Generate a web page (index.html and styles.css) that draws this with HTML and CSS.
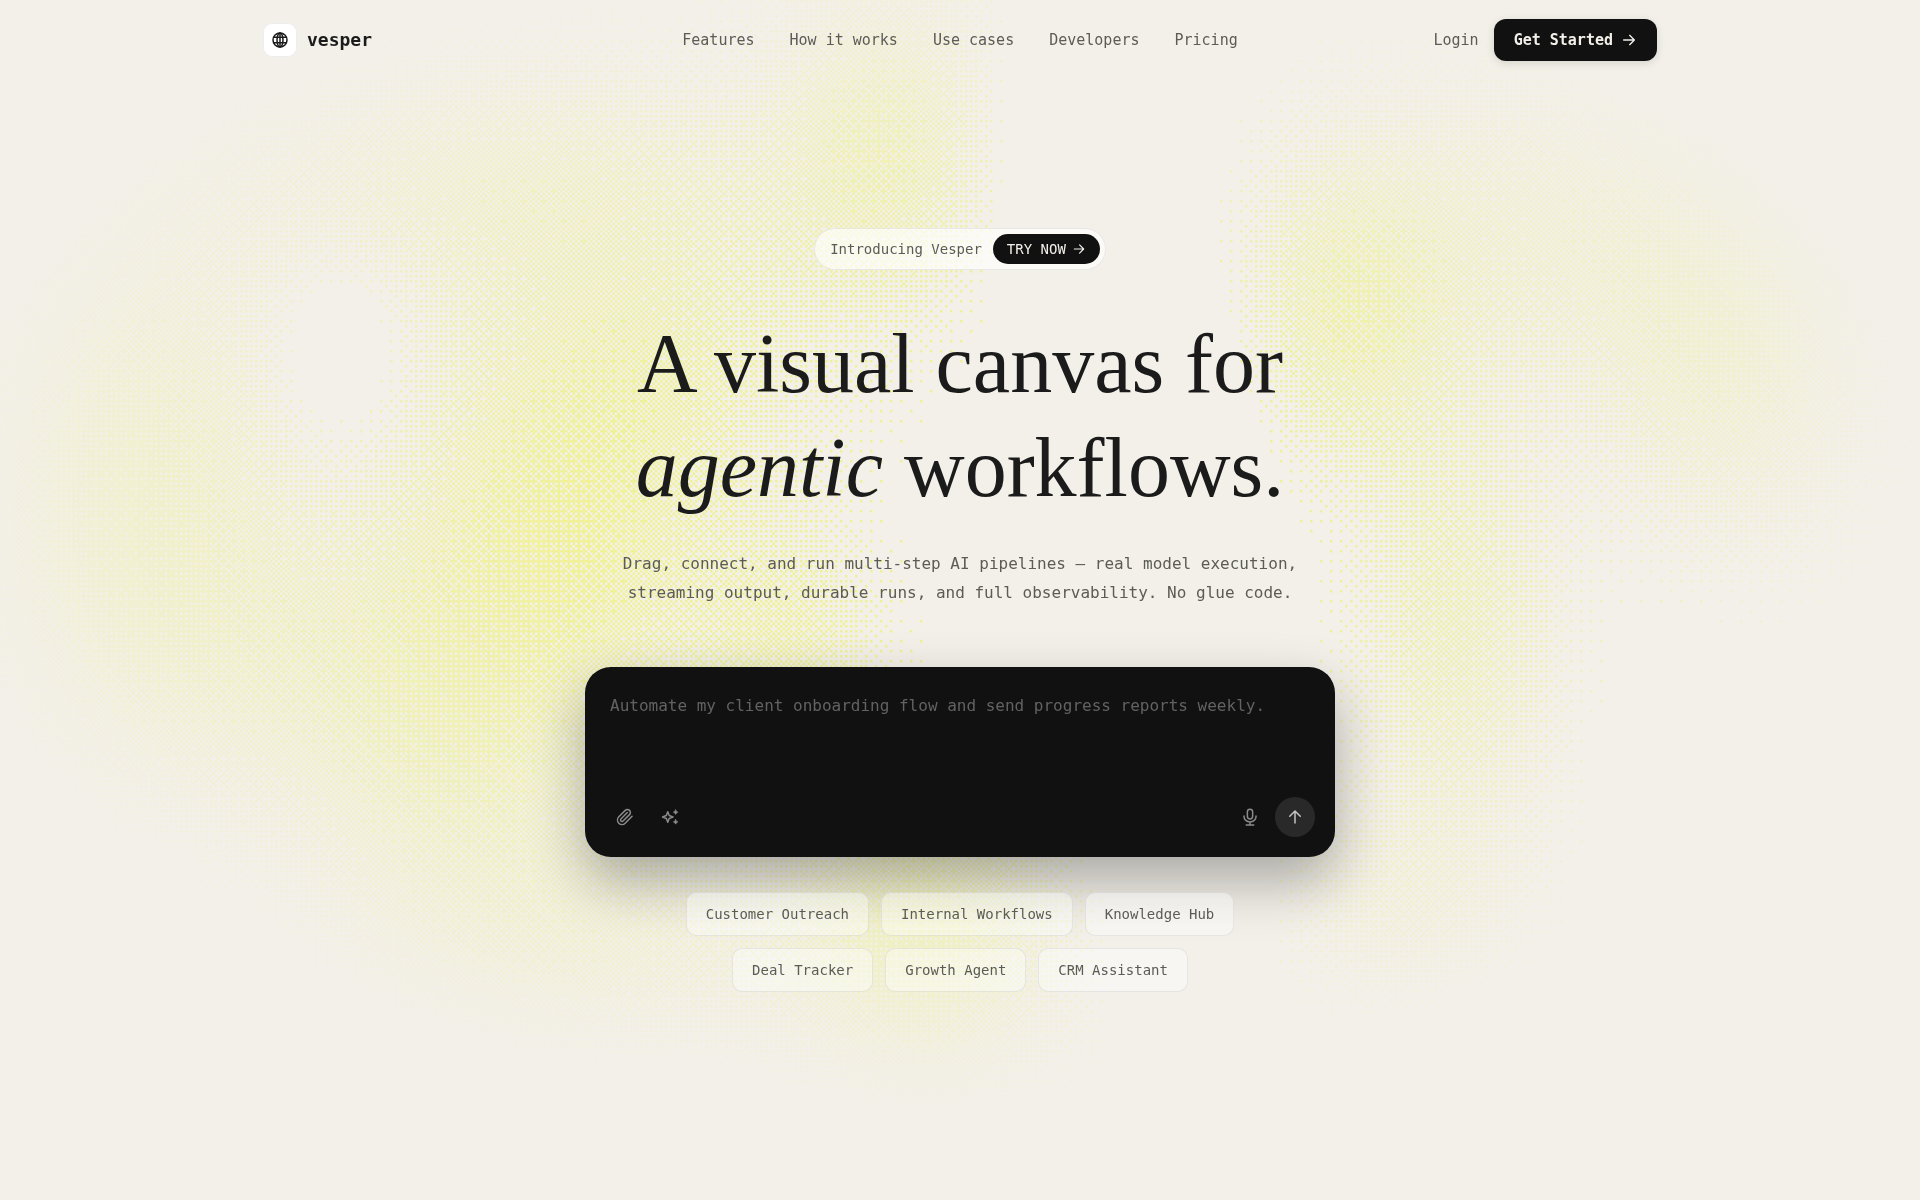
FILE: index.html
```html
<!DOCTYPE html>
<html lang="en">
<head>
<meta charset="utf-8">
<meta name="viewport" content="width=device-width, initial-scale=1">
<title>Vesper</title>
<link rel="stylesheet" href="styles.css">
</head>
<body>
<canvas class="backdrop" aria-hidden="true"></canvas>
<div class="page">
  <header class="header">
    <a class="brand" href="#">
      <span class="brand-mark">
        <svg class="icon-brand" viewBox="0 0 16 16" aria-hidden="true"><circle cx="8" cy="8" r="7"/><ellipse cx="8" cy="8" rx="3" ry="7"/><path d="M8 1v14M1.8 5.2h12.4M1.8 10.8h12.4"/></svg>
      </span>
      <span class="brand-name">vesper</span>
    </a>
    <nav class="nav" aria-label="Main">
      <a href="#">Features</a>
      <a href="#">How it works</a>
      <a href="#">Use cases</a>
      <a href="#">Developers</a>
      <a href="#">Pricing</a>
    </nav>
    <div class="account">
      <a class="login" href="#">Login</a>
      <button class="start" type="button">Get Started
        <svg class="icon-small" viewBox="0 0 24 24" aria-hidden="true"><path d="M4 12h16M13 5l7 7-7 7"/></svg>
      </button>
    </div>
  </header>

  <main class="hero">
    <div class="intro">
      <span>Introducing Vesper</span>
      <button class="try" type="button">TRY NOW
        <svg class="icon-tiny" viewBox="0 0 24 24" aria-hidden="true"><path d="M4 12h16M13 5l7 7-7 7"/></svg>
      </button>
    </div>
    <h1 class="title">A visual canvas for<br><em>agentic</em> workflows.</h1>
    <p class="lead">Drag, connect, and run multi-step AI pipelines — real model execution,<br>streaming output, durable runs, and full observability. No glue code.</p>

    <form class="composer">
      <textarea class="prompt" aria-label="Describe your workflow" placeholder="Automate my client onboarding flow and send progress reports weekly."></textarea>
      <div class="tools">
        <button class="tool" type="button" aria-label="Attach file">
          <svg class="icon" viewBox="0 0 24 24" aria-hidden="true"><path d="m21.44 11.05-9.19 9.19a6 6 0 0 1-8.49-8.49l8.57-8.57A4 4 0 1 1 18 8.84l-8.59 8.57a2 2 0 0 1-2.83-2.83l8.49-8.48"/></svg>
        </button>
        <button class="tool" type="button" aria-label="Enhance prompt">
          <svg class="icon" viewBox="0 0 24 24" aria-hidden="true"><path d="M9 5l1.900 5.100L16 12l-5.100 1.900L9 19l-1.900-5.100L2 12l5.100-1.900z"/><path class="solid" d="M19.500 2.500l1 2 2 1-2 1-1 2-1-2-2-1 2-1zM19.500 15.500l1 2 2 1-2 1-1 2-1-2-2-1 2-1z"/></svg>
        </button>
        <button class="tool mic" type="button" aria-label="Dictate">
          <svg class="icon" viewBox="0 0 24 24" aria-hidden="true"><rect x="8.500" y="1.500" width="7" height="13" rx="3.500"/><path d="M4 10.500v1a8 7 0 0 0 16 0v-1M12 18.500v4M7 22.500h10"/></svg>
        </button>
        <button class="tool send" type="submit" aria-label="Send">
          <svg class="icon" viewBox="0 0 24 24" aria-hidden="true"><path d="M12 20V4M5 11l7-7 7 7"/></svg>
        </button>
      </div>
    </form>

    <div class="chips">
      <button class="chip" type="button">Customer Outreach</button>
      <button class="chip" type="button">Internal Workflows</button>
      <button class="chip" type="button">Knowledge Hub</button>
      <button class="chip" type="button">Deal Tracker</button>
      <button class="chip" type="button">Growth Agent</button>
      <button class="chip" type="button">CRM Assistant</button>
    </div>
  </main>
</div>
<script src="backdrop.js"></script>
</body>
</html>
```
FILE: styles.css
```css
:root {
  --paper: #f3f0e9;
  --ink: #111111;
  --text: #5c5b55;
  --line: rgba(30, 30, 60, 0.08);
  --mono: "DejaVu Sans Mono", "Liberation Mono", monospace;
}

* {
  box-sizing: border-box;
}

body {
  margin: 0;
  min-height: 100vh;
  background: var(--paper);
  color: var(--text);
  font-family: var(--mono);
  font-size: 15px;
  line-height: 20px;
}

a {
  color: inherit;
  text-decoration: none;
}

button {
  border: 0;
  font: inherit;
  color: inherit;
  cursor: pointer;
}

svg {
  display: block;
  flex: none;
  fill: none;
  stroke: currentColor;
  stroke-width: 2;
  stroke-linecap: round;
  stroke-linejoin: round;
}

.icon { width: 18px; height: 18px; }
.icon-small { width: 16px; height: 16px; }
.icon-tiny { width: 14px; height: 14px; }
.icon-brand { width: 16px; height: 16px; stroke-width: 1.5; }
.solid { fill: currentColor; stroke-width: 1; }

.backdrop {
  position: fixed;
  inset: 0;
  z-index: -1;
  width: 100%;
  height: 100%;
}

.page {
  max-width: 1440px;
  margin: 0 auto;
  padding: 0 23px;
}

.header {
  display: grid;
  grid-template-columns: 1fr auto 1fr;
  align-items: center;
  height: 80px;
}

.brand {
  display: flex;
  align-items: center;
  gap: 10px;
  color: #1b1b1b;
}

.brand-mark {
  display: grid;
  place-items: center;
  width: 34px;
  height: 34px;
  border: 1px solid var(--line);
  border-radius: 9px;
  background: #ffffff;
}

.brand-name {
  font-size: 18px;
  font-weight: 700;
}

.nav {
  display: flex;
  gap: 35px;
}

.account {
  display: flex;
  justify-content: flex-end;
  align-items: center;
  gap: 15px;
}

.start {
  display: flex;
  align-items: center;
  gap: 8px;
  height: 42px;
  padding: 0 20px;
  border-radius: 12px;
  background: var(--ink);
  color: #f3f0e9;
  font-weight: 700;
  box-shadow: 0 2px 8px rgba(0, 0, 0, 0.12);
}

.hero {
  display: flex;
  flex-direction: column;
  align-items: center;
  padding: 148px 0 80px;
  text-align: center;
}

.intro {
  display: flex;
  align-items: center;
  gap: 11px;
  height: 42px;
  padding: 0 5px 0 15px;
  border: 1px solid var(--line);
  border-radius: 21px;
  background: rgba(255, 255, 255, 0.65);
  font-size: 14px;
}

.try {
  display: flex;
  align-items: center;
  gap: 6px;
  height: 30px;
  padding: 0 14px;
  border-radius: 15px;
  background: var(--ink);
  color: #f3f0e9;
}

.title {
  margin: 42px 0 0;
  color: #1b1b1b;
  font-family: "Liberation Serif", serif;
  font-size: 84px;
  font-weight: 400;
  line-height: 104px;
}

.lead {
  margin: 29px 0 0;
  font-size: 16px;
  line-height: 29px;
}

.composer {
  display: flex;
  flex-direction: column;
  justify-content: space-between;
  width: 100%;
  max-width: 750px;
  min-height: 190px;
  margin-top: 60px;
  padding: 20px;
  border-radius: 26px;
  background: var(--ink);
  box-shadow: 0 24px 56px rgba(0, 0, 0, 0.3);
}

.prompt {
  width: 100%;
  height: 80px;
  padding: 5px;
  border: 0;
  outline: 0;
  resize: none;
  background: none;
  color: #f3f0e9;
  font-family: var(--mono);
  font-size: 16px;
  line-height: 28px;
}

.prompt::placeholder {
  color: #626262;
}

.tools {
  display: flex;
  gap: 5px;
}

.tool {
  display: grid;
  place-items: center;
  width: 40px;
  height: 40px;
  padding: 0;
  border-radius: 20px;
  background: none;
  color: #8b8b8b;
}

.mic {
  margin-left: auto;
}

.send {
  background: #292929;
  color: #c4c4c4;
}

.chips {
  display: flex;
  flex-wrap: wrap;
  justify-content: center;
  gap: 12px;
  max-width: 640px;
  margin-top: 35px;
}

.chip {
  height: 44px;
  padding: 0 19px;
  border: 1px solid var(--line);
  border-radius: 10px;
  background: rgba(255, 255, 255, 0.4);
  font-size: 14px;
}
```
FILE: backdrop.js
```js
// Ordered-dither glow: soft blobs, thresholded through an 8x8 Bayer matrix.
const canvas = document.querySelector('.backdrop');
const CELL = 2.5;

const bayer = (x, y) => {
  let v = 0;
  for (let bit = 0; bit < 3; bit++) {
    const bx = (x >> bit) & 1;
    const by = (y >> bit) & 1;
    v = v * 4 + ((bx ^ by) * 2 + by);
  }
  return (v + 0.5) / 64;
};

// x, y, x radius, y radius, strength; positions are fractions of the window
const blobs = [
  [0.285, 0.46, 0.09, 0.16, 0.62],
  [0.23, 0.66, 0.08, 0.15, 0.55],
  [0.33, 0.29, 0.10, 0.13, 0.38],
  [0.41, 0.54, 0.045, 0.10, 0.42],
  [0.06, 0.40, 0.08, 0.22, 0.85],
  [0.13, 0.56, 0.10, 0.12, 0.35],
  [0.46, 0.10, 0.055, 0.14, 0.65],
  [0.24, 0.14, 0.16, 0.10, 0.50],
  [0.705, 0.25, 0.055, 0.13, 0.62],
  [0.76, 0.54, 0.05, 0.18, 0.52],
  [0.73, 0.76, 0.055, 0.08, 0.35],
  [0.91, 0.28, 0.07, 0.15, 0.75],
  [0.82, 0.17, 0.10, 0.13, 0.50],
  [0.48, 0.80, 0.065, 0.14, 0.85],
  [0.30, 0.80, 0.11, 0.09, 0.50],
  [0.175, 0.29, 0.035, 0.09, -0.28],
  [0.60, 0.45, 0.045, 0.20, -0.45],
  [0.56, 0.12, 0.04, 0.14, -0.35]
];

const clamp = (v) => Math.max(0, Math.min(1, v));

function paint() {
  const w = window.innerWidth;
  const h = window.innerHeight;
  const cols = Math.ceil(w / CELL);
  const rows = Math.ceil(h / CELL);
  const small = document.createElement('canvas');
  small.width = cols;
  small.height = rows;
  const sctx = small.getContext('2d');
  const img = sctx.createImageData(cols, rows);

  for (let y = 0; y < rows; y++) {
    for (let x = 0; x < cols; x++) {
      const u = x / cols;
      const v = y / rows;
      let d = -0.05;
      for (const [bx, by, rx, ry, s] of blobs) {
        d += s * Math.exp(-(((u - bx) / rx) ** 2 + ((v - by) / ry) ** 2));
      }
      if (Math.min(d, 0.93) <= bayer(x, y)) continue;
      const r = Math.hypot((u - 0.49) / 0.53, (v - 0.43) / 0.50);
      const fade = clamp((1 - r) / 0.65);
      const warm = Math.exp(-(((u - 0.29) / 0.07) ** 2 + ((v - 0.46) / 0.12) ** 2));
      const i = (y * cols + x) * 4;
      img.data[i] = 236 + 4 * warm;
      img.data[i + 1] = 241;
      img.data[i + 2] = 132;
      img.data[i + 3] = 205 * fade;
    }
  }
  sctx.putImageData(img, 0, 0);

  canvas.width = w * 2;
  canvas.height = h * 2;
  const ctx = canvas.getContext('2d');
  ctx.imageSmoothingEnabled = false;
  ctx.drawImage(small, 0, 0, cols * CELL * 2, rows * CELL * 2);
}

paint();
window.addEventListener('resize', paint);
```
